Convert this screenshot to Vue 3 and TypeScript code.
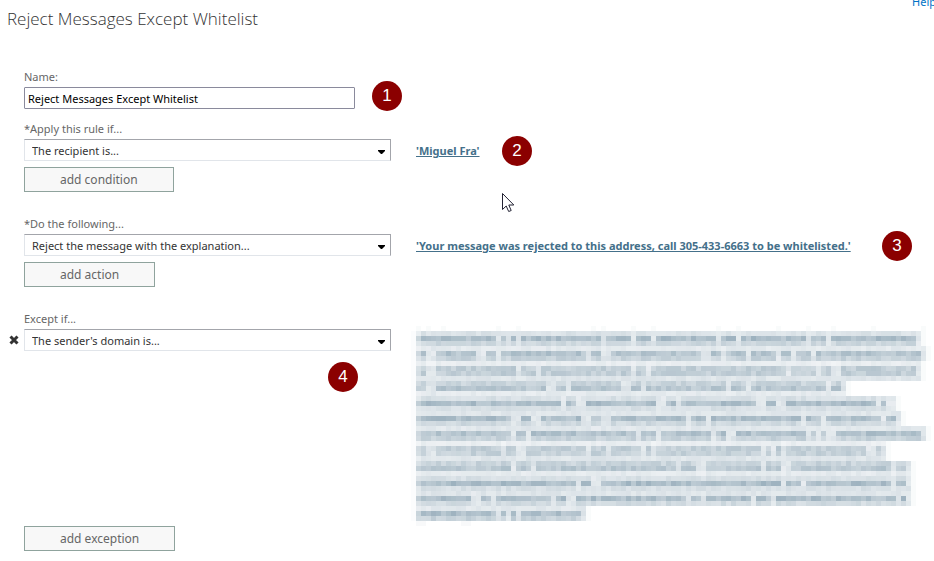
<script setup lang="ts">
import { computed, ref } from 'vue'

const ruleName = ref('Reject Messages Except Whitelist')
const condition = ref('The recipient is...')
const action = ref('Reject the message with the explanation...')
const exception = ref("The sender's domain is...")

interface Line {
  end: number
  gaps: number[]
}

interface Cell {
  x: number
  y: number
  ink: number
}

/* Censored domain list: one entry per text line, counted in mosaic cells. */
const lines: Line[] = [
  { end: 101, gaps: [16, 18, 20, 37, 43, 47, 60, 64, 78, 82] },
  { end: 102, gaps: [2, 3, 12, 13, 16, 34, 37, 38, 57, 58, 61, 66, 72, 75, 79] },
  { end: 101, gaps: [2, 3, 20, 24, 43, 46, 74, 80, 83, 84] },
  { end: 86, gaps: [2, 3, 26, 27, 30, 41, 42, 45, 62, 66, 82, 85] },
  { end: 96, gaps: [29, 32, 33, 48, 49, 52, 68, 69, 72, 73, 92, 94] },
  { end: 97, gaps: [19, 20, 23, 24, 33, 34, 37, 38, 54, 58, 77, 81, 93] },
  { end: 102, gaps: [19, 22, 44, 48, 59, 62, 63, 78, 80, 82, 83] },
  { end: 94, gaps: [2, 3, 17, 20, 21, 34, 38, 45, 47, 69, 71, 73, 90, 91] },
  { end: 99, gaps: [19, 23, 52, 56, 57, 69, 73, 74, 95, 98] },
  { end: 99, gaps: [32, 35, 36, 73, 77, 95] },
  { end: 99, gaps: [11, 12, 15, 27, 30, 31, 54, 57, 67, 71, 96] },
  { end: 34, gaps: [16, 18, 20, 33] },
]

/* Each mosaic row: the text line it samples and how much ink it holds. */
const rows: [number, number][] = [
  [0, 0.2], [0, 0.45], [0, 0.28], [1, 0.15], [1, 0.41], [1, 0.31], [2, 0.12], [2, 0.34],
  [2, 0.34], [2, 0.18], [3, 0.3], [3, 0.39], [3, 0.14], [4, 0.22], [4, 0.45], [4, 0.22],
  [5, 0.17], [5, 0.44], [5, 0.27], [6, 0.16], [6, 0.42], [6, 0.31], [7, 0.12], [7, 0.34],
  [7, 0.32], [7, 0.18], [8, 0.3], [8, 0.38], [8, 0.14], [9, 0.22], [9, 0.46], [9, 0.22],
  [10, 0.18], [10, 0.44], [10, 0.25], [11, 0.16], [11, 0.44], [11, 0.31],
]

const CELL = 5

function grain(a: number, b: number): number {
  const n = Math.sin(a * 12.9898 + b * 78.233) * 43758.5453
  return n - Math.floor(n)
}

const cells = computed<Cell[]>(() => {
  const out: Cell[] = []
  rows.forEach(([index, ink], r) => {
    const line = lines[index]
    for (let c = 0; c < line.end; c++) {
      const faint = line.gaps.includes(c) || c === line.end - 1
      const base = faint ? Math.min(ink, 0.17) : ink
      const spread = faint ? 0.08 : ink * 0.4
      const edge = c === 0 ? 0.75 : 1
      out.push({
        x: (c + 1) * CELL,
        y: (r + 1) * CELL,
        ink: Math.round((base + (grain(c, r) - 0.5) * spread) * edge * 100) / 100,
      })
    }
    out.push({ x: 0, y: (r + 1) * CELL, ink: 0.02 })
    out.push({ x: (line.end + 1) * CELL, y: (r + 1) * CELL, ink: 0.03 })
  })
  for (const c of [0, 2, 5, 16, 20, 35, 37, 43, 47, 60, 64, 72, 78, 83, 91, 101]) {
    out.push({ x: (c + 1) * CELL, y: 0, ink: 0.03 })
  }
  for (const c of [0, 1, 9, 10]) {
    out.push({ x: (c + 1) * CELL, y: 39 * CELL, ink: 0.04 })
  }
  return out
})
</script>

<template>
  <main class="page">
    <header class="header">
      <h1 class="title">Reject Messages Except Whitelist</h1>
      <a class="help" href="#">Help</a>
    </header>

    <form class="rule" @submit.prevent>
      <section class="group">
        <label class="label" for="rule-name">Name:</label>
        <input id="rule-name" v-model="ruleName" class="name" type="text" />
      </section>

      <section class="group">
        <label class="label" for="condition">*Apply this rule if...</label>
        <div class="picker">
          <select id="condition" v-model="condition" class="select">
            <option>The recipient is...</option>
          </select>
          <svg class="arrow" viewBox="0 0 7 4" aria-hidden="true"><path d="M0 0h7v1L4 4H3L0 1z" /></svg>
        </div>
        <a class="value" href="#">'Miguel Fra'</a>
        <button class="add" type="button">add condition</button>
      </section>

      <section class="group">
        <label class="label" for="action">*Do the following...</label>
        <div class="picker">
          <select id="action" v-model="action" class="select">
            <option>Reject the message with the explanation...</option>
          </select>
          <svg class="arrow" viewBox="0 0 7 4" aria-hidden="true"><path d="M0 0h7v1L4 4H3L0 1z" /></svg>
        </div>
        <a class="value" href="#">'Your message was rejected to this address, call 305-433-6663 to be whitelisted.'</a>
        <button class="add" type="button">add action</button>
      </section>

      <section class="group">
        <label class="label" for="exception">Except if...</label>
        <button class="remove" type="button" aria-label="Remove exception">
          <svg viewBox="0 0 10 10"><path d="M1.500 1.500l7 7M8.500 1.500l-7 7" /></svg>
        </button>
        <div class="picker">
          <select id="exception" v-model="exception" class="select">
            <option>The sender's domain is...</option>
          </select>
          <svg class="arrow" viewBox="0 0 7 4" aria-hidden="true"><path d="M0 0h7v1L4 4H3L0 1z" /></svg>
        </div>
        <svg class="mosaic" width="520" height="200" viewBox="0 0 520 200" aria-hidden="true">
          <rect
            v-for="(cell, i) in cells"
            :key="i"
            :x="cell.x"
            :y="cell.y"
            width="5"
            height="5"
            :fill-opacity="cell.ink"
          />
        </svg>
        <button class="add add-last" type="button">add exception</button>
      </section>
    </form>

    <span class="callout one">1</span>
    <span class="callout two">2</span>
    <span class="callout three">3</span>
    <span class="callout four">4</span>
    <svg class="cursor" viewBox="0 0 13 20" aria-hidden="true">
      <path d="M.5.500v16l3.700-3.500 2.500 5.500 2.500-1-2.400-5.500h5z" />
    </svg>
  </main>
</template>

<style>
body {
  margin: 0;
  background: #fff;
}
</style>

<style scoped>
.page {
  position: relative;
  overflow: hidden;
  padding-bottom: 10px;
  font-family: "Noto Sans", "Open Sans", sans-serif;
  font-size: 11px;
  color: #666;
}

.header {
  display: flex;
  justify-content: space-between;
  height: 68px;
  padding-left: 7px;
}

.title {
  margin: 6px 0 0;
  font-family: "Open Sans", sans-serif;
  font-size: 17px;
  font-weight: 300;
  line-height: 26px;
  color: #333;
}

.help {
  margin: -7px -2px 0 0;
  line-height: 18px;
  color: #0072c6;
  text-decoration: none;
}

.rule {
  display: grid;
  gap: 23px;
}

.group {
  display: grid;
  grid-template-columns: 24px 367px minmax(0, 1fr);
  align-items: start;
}

.group:first-child {
  margin-bottom: -12px;
}

.label {
  grid-column: 2 / -1;
  height: 19px;
  line-height: 18px;
}

.name {
  grid-column: 2;
  box-sizing: border-box;
  width: 331px;
  height: 22px;
  padding: 0 3px;
  border: 1px solid #8a8a9c;
  border-radius: 1px;
  background: #fff;
  font: inherit;
  color: #000;
}

.picker {
  grid-column: 2;
  position: relative;
}

.select {
  display: block;
  box-sizing: border-box;
  width: 100%;
  height: 22px;
  padding: 0 24px 0 7px;
  border: 1px solid;
  border-color: #a3a5ab #a3a5ab #e1e5ea #e1e5ea;
  border-radius: 0;
  background: #fff;
  font: inherit;
  color: #333;
  appearance: none;
}

.arrow {
  position: absolute;
  top: 11px;
  right: 6px;
  width: 7px;
  height: 4px;
  fill: #000;
  pointer-events: none;
}

.value {
  grid-column: 3;
  justify-self: start;
  margin-left: 25px;
  font-weight: 700;
  line-height: 24px;
  height: 22px;
  white-space: nowrap;
  color: #44708a;
}

.add {
  grid-column: 2;
  justify-self: start;
  box-sizing: border-box;
  height: 25px;
  margin-top: 6px;
  padding: 0 35px;
  border: 1px solid #8fa39d;
  background: #f8f8f8;
  font: inherit;
  font-size: 12px;
  color: #666;
}

.add-last {
  margin-top: 0;
}

.remove {
  grid-column: 1;
  display: flex;
  align-items: center;
  height: 22px;
  padding: 0 0 0 9px;
  border: 0;
  background: none;
}

.remove svg {
  width: 10px;
  height: 10px;
  fill: none;
  stroke: #333;
  stroke-width: 3;
}

.mosaic {
  display: block;
  grid-column: 3;
  margin: -3px 0 0 20px;
  fill: #4a7088;
  shape-rendering: crispEdges;
}

.callout {
  position: absolute;
  width: 30px;
  height: 30px;
  border-radius: 50%;
  background: #8b0000;
  font-family: "Liberation Sans", sans-serif;
  font-size: 17px;
  line-height: 30px;
  text-align: center;
  color: #fff;
}

.one {
  top: 81px;
  left: 372px;
}

.two {
  top: 136px;
  left: 502px;
}

.three {
  top: 231px;
  left: 882px;
}

.four {
  top: 362px;
  left: 328px;
}

.cursor {
  position: absolute;
  top: 193px;
  left: 502px;
  width: 13px;
  height: 20px;
  fill: #fff;
  stroke: #223;
}
</style>
